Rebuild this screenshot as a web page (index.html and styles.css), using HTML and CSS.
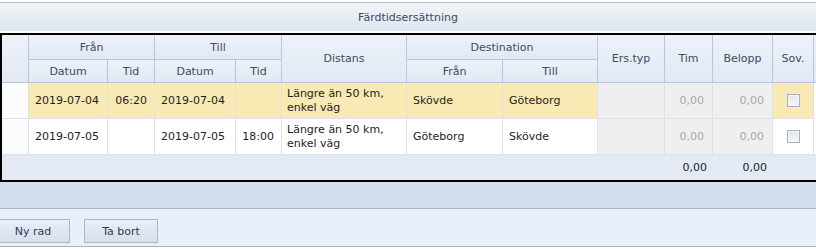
FILE: index.html
```html
<!DOCTYPE html>
<html lang="sv">
<head>
<meta charset="utf-8">
<title>Färdtidsersättning</title>
<link rel="stylesheet" href="styles.css">
</head>
<body>
<div class="titlebar">Färdtidsersättning</div>
<div class="grid">
  <table class="tbl">
    <colgroup>
      <col class="c-ind">
      <col class="c-date">
      <col class="c-tid">
      <col class="c-date2">
      <col class="c-tid2">
      <col class="c-dist">
      <col class="c-dfran">
      <col class="c-dtill">
      <col class="c-ers">
      <col class="c-tim">
      <col class="c-bel">
      <col class="c-sov">
      <col class="c-fill">
    </colgroup>
    <thead>
      <tr class="h1">
        <th rowspan="2" class="ind"></th>
        <th colspan="2">Från</th>
        <th colspan="2">Till</th>
        <th rowspan="2">Distans</th>
        <th colspan="2">Destination</th>
        <th rowspan="2">Ers.typ</th>
        <th rowspan="2">Tim</th>
        <th rowspan="2">Belopp</th>
        <th rowspan="2">Sov.</th>
        <th rowspan="2" class="fill"></th>
      </tr>
      <tr class="h2">
        <th>Datum</th>
        <th>Tid</th>
        <th>Datum</th>
        <th>Tid</th>
        <th>Från</th>
        <th>Till</th>
      </tr>
    </thead>
    <tbody>
      <tr class="row sel">
        <td class="ind"></td>
        <td>2019-07-04</td>
        <td class="num">06:20</td>
        <td>2019-07-04</td>
        <td class="num"></td>
        <td class="dist">Längre än 50 km,<br>enkel väg</td>
        <td>Skövde</td>
        <td>Göteborg</td>
        <td class="dis"></td>
        <td class="dis amt">0,00</td>
        <td class="dis amt">0,00</td>
        <td class="chk"><span class="box"></span></td>
        <td class="fill"></td>
      </tr>
      <tr class="row">
        <td class="ind"></td>
        <td>2019-07-05</td>
        <td class="num"></td>
        <td>2019-07-05</td>
        <td class="num">18:00</td>
        <td class="dist">Längre än 50 km,<br>enkel väg</td>
        <td>Göteborg</td>
        <td>Skövde</td>
        <td class="dis"></td>
        <td class="dis amt">0,00</td>
        <td class="dis amt">0,00</td>
        <td class="chk"><span class="box"></span></td>
        <td class="fill"></td>
      </tr>
    </tbody>
    <tfoot>
      <tr class="foot">
        <td colspan="9"></td>
        <td class="amt">0,00</td>
        <td class="amt">0,00</td>
        <td></td>
        <td></td>
      </tr>
    </tfoot>
  </table>
</div>
<div class="band"></div>
<div class="toolbar">
  <button class="btn btn-first" type="button">Ny rad</button>
  <button class="btn" type="button">Ta bort</button>
</div>
</body>
</html>
```
FILE: styles.css
```css
html, body {
  margin: 0;
  padding: 0;
  background: #ffffff;
  overflow: hidden;
}
body {
  font-family: "DejaVu Sans", Verdana, sans-serif;
  font-size: 11px;
  color: #1e1e1e;
  width: 816px;
}

.titlebar {
  margin-top: 2px;
  margin-bottom: 2px;
  height: 28px;
  border-top: 1px solid #b3bfcd;
  background: linear-gradient(#f2f5f9, #dde5ef);
  display: flex;
  align-items: center;
  justify-content: center;
  color: #3a4a60;
}

.grid {
  width: 840px;
  border: 2px solid #000;
  border-right: none;
}

.tbl {
  table-layout: fixed;
  border-collapse: separate;
  border-spacing: 0;
  width: 838px;
}

.c-ind { width: 27px; }
.c-date { width: 79px; }
.c-tid { width: 47px; }
.c-date2 { width: 81px; }
.c-tid2 { width: 46px; }
.c-dist { width: 125px; }
.c-dfran { width: 96px; }
.c-dtill { width: 95px; }
.c-ers { width: 67px; }
.c-tim { width: 48px; }
.c-bel { width: 60px; }
.c-sov { width: 41px; }
.c-fill { width: auto; }

.tbl th, .tbl td {
  box-sizing: border-box;
  padding: 0;
  overflow: hidden;
  white-space: nowrap;
}

.tbl th {
  font-weight: normal;
  color: #404b5a;
  background: linear-gradient(#edf2f9, #e2e9f4);
  border-right: 1px solid #b8c6d8;
  border-bottom: 1px solid #b8c6d8;
  text-align: center;
  vertical-align: middle;
}
.h1 th { height: 25px; }
.h2 th { height: 23px; }

.row td {
  height: 36px;
  background: #ffffff;
  border-right: 1px solid #dde2e9;
  border-bottom: 1px solid #dde2e9;
  padding: 0 6px;
  vertical-align: middle;
}
.row td.ind { padding: 0; background: #fbfcfe; }
.row.sel td { background: #f9e9b2; }
.row.sel td.ind { background: #fbfcfe; }
.row td.num { text-align: right; padding-right: 7px; }
.row td.dist { white-space: normal; line-height: 14px; padding-left: 5px; padding-right: 2px; }
.row td.dis, .row.sel td.dis { background: #efefef; color: #a8a8a8; }
.row td.amt { text-align: right; padding-right: 8px; }
.row td.chk { text-align: center; padding: 0; }
.row td.fill, .row.sel td.fill { background: #ffffff; border-right: none; }

.box {
  display: inline-block;
  width: 11px;
  height: 11px;
  border: 1px solid #a6b0be;
  background: linear-gradient(#e3e6ea, #f6f7f9);
  box-shadow: inset 0 0 0 1px #f4f5f7;
  vertical-align: middle;
}

.foot td {
  height: 25px;
  background: #e3eaf5;
  vertical-align: middle;
}
.foot td.amt { text-align: right; padding-right: 6px; }

.band {
  height: 26px;
  background: #d2dfee;
  border-bottom: 1px solid #a8b5c5;
}

.toolbar {
  height: 38px;
  background: #e9f0f9;
  border-bottom: 1px solid #a8b4c2;
  display: flex;
  align-items: flex-start;
  gap: 14px;
  padding-top: 10px;
  box-sizing: border-box;
}

.btn {
  height: 24px;
  width: 74px;
  margin: 0;
  padding: 0;
  border: 1px solid #a9b7c8;
  background: linear-gradient(#e9eff7, #d6e0ed);
  font-family: "DejaVu Sans", Verdana, sans-serif;
  font-size: 11px;
  color: #2f3d52;
}
.btn-first { margin-left: -4px; }
```
